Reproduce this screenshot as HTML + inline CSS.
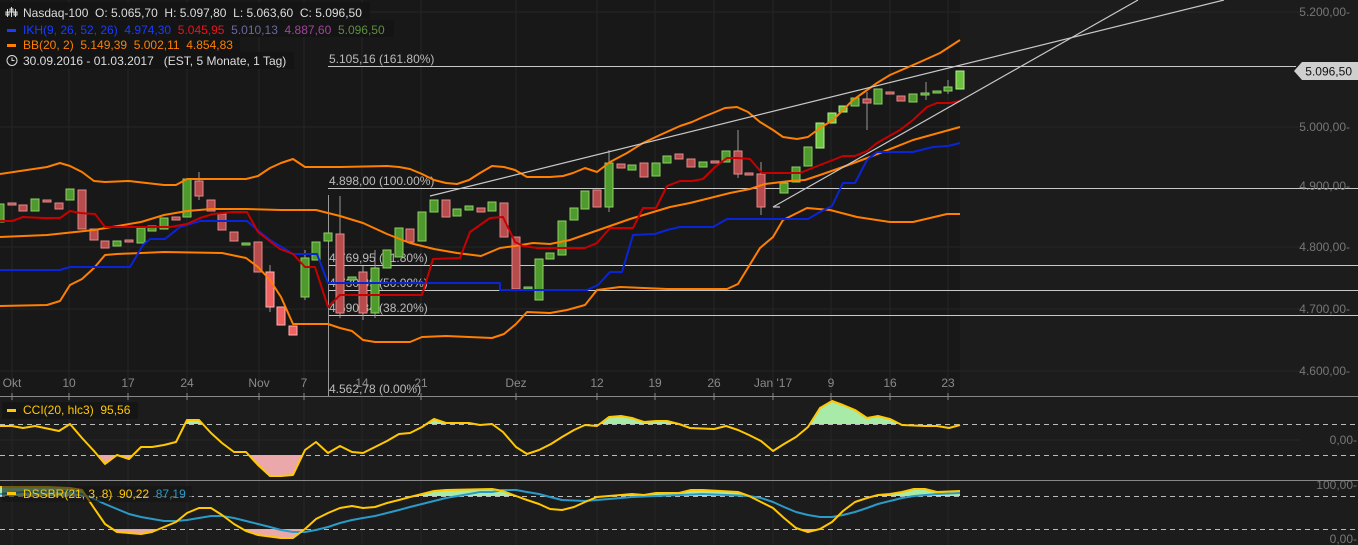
<!DOCTYPE html>
<html><head><meta charset="utf-8"><style>
body{margin:0;background:#1c1c1c;width:1358px;height:545px;overflow:hidden;font-family:"Liberation Sans",sans-serif}
svg{position:absolute;left:0;top:0}
.g{fill:#4f9a2c;stroke:#8ccf66;stroke-width:1}
.lg{fill:#6cc23c;stroke:#b4f08c;stroke-width:1}
.r{fill:#b84c4c;stroke:#e08a8a;stroke-width:1}
.lr{fill:#f06262;stroke:#ffb0b0;stroke-width:1}
.ln{fill:none;stroke-width:2;stroke-linejoin:round}
.t{font-size:12px;fill:#777}
.d{font-size:12px;fill:#8a8a8a}
.f{font-size:12px;fill:#bbb}
.lt{font-size:12px}
</style></head><body>
<svg width="1358" height="545" viewBox="0 0 1358 545">
<defs>
<clipPath id="main"><rect x="0" y="0" width="1358" height="396"/></clipPath>
<clipPath id="cciup"><rect x="0" y="397" width="1358" height="27"/></clipPath>
<clipPath id="ccidn"><rect x="0" y="455" width="1358" height="25"/></clipPath>
<clipPath id="dssup"><rect x="0" y="481" width="1358" height="15"/></clipPath>
<clipPath id="dssdn"><rect x="0" y="529" width="1358" height="16"/></clipPath>
</defs>
<rect x="0" y="0" width="960" height="396" fill="#181818"/>
<g stroke="#262626" stroke-width="1">
<line x1="0" y1="12" x2="1300" y2="12"/><line x1="0" y1="127" x2="1300" y2="127"/><line x1="0" y1="247" x2="1300" y2="247"/><line x1="0" y1="309" x2="1300" y2="309"/><line x1="0" y1="371" x2="1300" y2="371"/>
<line x1="12" y1="0" x2="12" y2="545"/><line x1="69" y1="0" x2="69" y2="545"/><line x1="128" y1="0" x2="128" y2="545"/><line x1="187" y1="0" x2="187" y2="545"/><line x1="259" y1="0" x2="259" y2="545"/><line x1="304" y1="0" x2="304" y2="545"/><line x1="362" y1="0" x2="362" y2="545"/><line x1="421" y1="0" x2="421" y2="545"/><line x1="516" y1="0" x2="516" y2="545"/><line x1="597" y1="0" x2="597" y2="545"/><line x1="655" y1="0" x2="655" y2="545"/><line x1="714" y1="0" x2="714" y2="545"/><line x1="773" y1="0" x2="773" y2="545"/><line x1="831" y1="0" x2="831" y2="545"/><line x1="890" y1="0" x2="890" y2="545"/><line x1="948" y1="0" x2="948" y2="545"/>
<line x1="0" y1="440" x2="1300" y2="440"/>
</g>
<g clip-path="url(#main)">
<!-- fib lines -->
<g stroke="#c8c8c8" stroke-width="1">
<line x1="328" y1="66.5" x2="1296" y2="66.5"/>
<line x1="328" y1="188.5" x2="1358" y2="188.5"/>
<line x1="328" y1="265.5" x2="1358" y2="265.5"/>
<line x1="328" y1="290.5" x2="1358" y2="290.5"/>
<line x1="328" y1="315.5" x2="1358" y2="315.5"/>
<line x1="328.5" y1="195" x2="328.5" y2="396" stroke="#999"/>
</g>
<text class="f" x="329" y="63">5.105,16 (161.80%)</text>
<text class="f" x="329" y="185">4.898,00 (100.00%)</text>
<text class="f" x="329" y="262">4.769,95 (61.80%)</text>
<text class="f" x="329" y="287">4.730,39 (50.00%)</text>
<text class="f" x="329" y="312">4.690,84 (38.20%)</text>
<!-- wicks -->
<g stroke="#999" stroke-width="1">
<line x1="340" y1="196" x2="340" y2="318"/><line x1="738" y1="130" x2="738" y2="178"/><line x1="761" y1="162" x2="761" y2="215"/><line x1="867" y1="92" x2="867" y2="130"/><line x1="199" y1="172" x2="199" y2="200"/><line x1="609" y1="150" x2="609" y2="212"/><line x1="270" y1="265" x2="270" y2="312"/><line x1="305" y1="250" x2="305" y2="300"/><line x1="375" y1="250" x2="375" y2="318"/><line x1="363" y1="266" x2="363" y2="320"/><line x1="926" y1="82" x2="926" y2="100"/><line x1="948" y1="80" x2="948" y2="94"/>
</g>
<!-- candles -->
<rect class="g" x="-4" y="204" width="8" height="18"/>
<rect class="r" x="8" y="203" width="8" height="2"/>
<rect class="r" x="19" y="205" width="8" height="6"/>
<rect class="g" x="31" y="199" width="8" height="12"/>
<rect class="r" x="43" y="200" width="8" height="2"/>
<rect class="r" x="55" y="203" width="8" height="6"/>
<rect class="g" x="66" y="189" width="8" height="11"/>
<rect class="r" x="78" y="190" width="8" height="39"/>
<rect class="r" x="90" y="229" width="8" height="11"/>
<rect class="r" x="101" y="241" width="8" height="7"/>
<rect class="g" x="113" y="241" width="8" height="5"/>
<rect class="r" x="125" y="240" width="8" height="2"/>
<rect class="g" x="137" y="228" width="8" height="15"/>
<rect class="g" x="148" y="226" width="8" height="5"/>
<rect class="g" x="160" y="218" width="8" height="11"/>
<rect class="r" x="172" y="217" width="8" height="3"/>
<rect class="g" x="183" y="179" width="8" height="38"/>
<rect class="r" x="195" y="181" width="8" height="15"/>
<rect class="r" x="207" y="200" width="8" height="11"/>
<rect class="r" x="218" y="214" width="8" height="16"/>
<rect class="r" x="230" y="232" width="8" height="9"/>
<rect class="g" x="242" y="243" width="8" height="2"/>
<rect class="r" x="254" y="242" width="8" height="30"/>
<rect class="lr" x="266" y="272" width="8" height="35"/>
<rect class="lr" x="277" y="307" width="8" height="18"/>
<rect class="lr" x="289" y="326" width="8" height="9"/>
<rect class="g" x="301" y="258" width="8" height="39"/>
<rect class="g" x="312" y="242" width="8" height="18"/>
<rect class="g" x="324" y="233" width="8" height="8"/>
<rect class="r" x="336" y="234" width="8" height="79"/>
<rect class="g" x="348" y="277" width="8" height="3"/>
<rect class="r" x="359" y="272" width="8" height="41"/>
<rect class="g" x="371" y="268" width="8" height="45"/>
<rect class="g" x="383" y="250" width="8" height="18"/>
<rect class="g" x="395" y="228" width="8" height="29"/>
<rect class="r" x="406" y="229" width="8" height="13"/>
<rect class="g" x="418" y="212" width="8" height="29"/>
<rect class="g" x="430" y="200" width="8" height="12"/>
<rect class="r" x="442" y="200" width="8" height="17"/>
<rect class="g" x="453" y="209" width="8" height="7"/>
<rect class="g" x="465" y="206" width="8" height="4"/>
<rect class="r" x="477" y="208" width="8" height="4"/>
<rect class="g" x="488" y="202" width="8" height="9"/>
<rect class="r" x="500" y="203" width="8" height="34"/>
<rect class="r" x="512" y="237" width="8" height="52"/>
<rect class="g" x="524" y="287" width="8" height="2"/>
<rect class="g" x="535" y="259" width="8" height="41"/>
<rect class="g" x="546" y="253" width="8" height="6"/>
<rect class="g" x="558" y="221" width="8" height="34"/>
<rect class="g" x="570" y="208" width="8" height="12"/>
<rect class="g" x="581" y="191" width="8" height="18"/>
<rect class="r" x="593" y="190" width="8" height="17"/>
<rect class="g" x="605" y="163" width="8" height="44"/>
<rect class="r" x="617" y="164" width="8" height="4"/>
<rect class="g" x="628" y="165" width="8" height="5"/>
<rect class="r" x="640" y="163" width="8" height="14"/>
<rect class="g" x="652" y="163" width="8" height="13"/>
<rect class="g" x="663" y="156" width="8" height="7"/>
<rect class="r" x="675" y="154" width="8" height="5"/>
<rect class="r" x="687" y="159" width="8" height="8"/>
<rect class="g" x="699" y="162" width="8" height="5"/>
<rect class="r" x="711" y="161" width="8" height="2"/>
<rect class="g" x="722" y="151" width="8" height="11"/>
<rect class="r" x="734" y="151" width="8" height="23"/>
<rect class="r" x="745" y="173" width="8" height="2"/>
<rect class="r" x="757" y="174" width="8" height="33"/>
<rect class="g" x="780" y="183" width="8" height="10"/>
<rect class="g" x="792" y="167" width="8" height="15"/>
<rect class="g" x="804" y="147" width="8" height="19"/>
<rect class="lg" x="816" y="123" width="8" height="25"/>
<rect class="lg" x="828" y="113" width="8" height="10"/>
<rect class="lg" x="839" y="106" width="8" height="6"/>
<rect class="g" x="851" y="98" width="8" height="8"/>
<rect class="r" x="863" y="99" width="8" height="4"/>
<rect class="g" x="874" y="89" width="8" height="15"/>
<rect class="r" x="886" y="92" width="8" height="2"/>
<rect class="r" x="897" y="96" width="8" height="5"/>
<rect class="g" x="909" y="94" width="8" height="8"/>
<rect class="g" x="921" y="93" width="8" height="2"/>
<rect class="g" x="933" y="91" width="8" height="2"/>
<rect class="g" x="944" y="87" width="8" height="4"/>
<rect class="lg" x="956" y="71" width="8" height="18"/>
<!-- indicator lines -->
<polyline class="ln" stroke="#ff7f00" points="0,174 47,167 60,163 70,166 82,172 94,181 105,182 129,181 164,185 176,185 187,179 246,179 258,176 270,168 281,163 293,159 305,167 340,167 387,166 399,167 410,169 422,174 434,180 446,183 457,184 469,180 480,173 492,166 504,167 515,170 527,177 550,177 563,176 573,173 585,168 597,172 610,162 627,153 643,143 660,135 680,126 692,122 703,117 713,113 725,108 737,107 748,112 760,122 773,130 783,137 797,139 808,137 820,128 833,120 853,100 877,83 890,75 920,62 940,53 960,40"/>
<polyline class="ln" stroke="#ff7f00" points="0,237 47,235 94,230 141,222 164,215 187,211 211,209 246,209 281,210 316,210 340,216 363,223 387,234 410,243 434,249 457,253 481,256 500,248 515,246 533,243 550,244 570,240 590,233 610,226 630,219 650,213 670,207 690,203 710,198 730,193 750,189 765,184 790,181 805,180 820,175 840,168 870,157 913,140 960,127"/>
<polyline class="ln" stroke="#ff7f00" points="0,306 47,305 60,301 70,285 82,279 94,268 105,255 117,254 164,252 222,253 246,258 258,267 270,280 281,297 293,324 328,324 340,328 352,331 363,340 375,342 410,342 422,337 446,336 492,338 504,334 516,324 527,312 550,313 567,310 585,305 597,290 620,287 667,289 727,289 738,284 760,248 773,237 783,220 807,208 830,210 857,217 890,222 913,222 947,214 960,214"/>
<polyline class="ln" stroke="#0a24d8" points="0,270 60,270 70,267 130,267 143,245 150,239 165,239 180,227 200,221 247,221 260,232 270,240 293,254 317,254 328,283 500,283 500,290 587,290 598,285 610,272 622,272 633,235 655,234 667,230 680,227 713,227 727,219 808,219 820,212 832,206 843,183 855,183 867,160 877,152 913,152 933,147 948,146 960,143"/>
<polyline class="ln" stroke="#c80000" points="0,221 12,221 23,217 43,218 60,218 70,211 80,213 95,214 105,227 170,227 187,224 200,218 213,214 233,212 247,212 258,232 280,249 293,254 305,267 315,267 328,307 340,295 422,295 433,259 460,258 470,232 490,218 503,217 515,242 523,246 537,248 585,248 597,243 610,228 633,228 643,208 656,208 667,186 680,181 692,181 703,179 715,167 727,158 737,158 750,159 762,173 800,173 820,165 833,160 843,156 855,156 867,151 877,143 900,130 913,120 927,107 937,103 950,103 960,101"/>
<g stroke="#c8c8c8" stroke-width="1.2">
<line x1="430" y1="196" x2="1224" y2="0"/>
<line x1="773" y1="207" x2="1138" y2="0"/>
<line x1="773" y1="207" x2="780" y2="207"/>
</g>
</g>
<text class="f" x="329" y="393">4.562,78 (0.00%)</text>
<!-- axes -->
<g class="t" text-anchor="end">
<text x="1350" y="16">5.200,00-</text><text x="1350" y="131">5.000,00-</text><text x="1350" y="190">4.900,00-</text><text x="1350" y="251">4.800,00-</text><text x="1350" y="313">4.700,00-</text><text x="1350" y="375">4.600,00-</text>
<text x="1357" y="444">0,00-</text><text x="1357" y="489">100,00-</text><text x="1357" y="543">0,00-</text>
</g>
<path d="M1294,71 L1302,62 L1358,62 L1358,80 L1302,80 Z" fill="#cfcfcf"/>
<text x="1352" y="75.5" font-size="12" fill="#111" text-anchor="end">5.096,50</text>
<g class="d" text-anchor="middle">
<text x="12" y="387">Okt</text><text x="69" y="387">10</text><text x="128" y="387">17</text><text x="187" y="387">24</text><text x="259" y="387">Nov</text><text x="304" y="387">7</text><text x="362" y="387">14</text><text x="421" y="387">21</text><text x="516" y="387">Dez</text><text x="597" y="387">12</text><text x="655" y="387">19</text><text x="714" y="387">26</text><text x="773" y="387">Jan '17</text><text x="831" y="387">9</text><text x="890" y="387">16</text><text x="948" y="387">23</text>
</g>
<line x1="0" y1="396.5" x2="1358" y2="396.5" stroke="#888"/>
<line x1="0" y1="480.5" x2="1358" y2="480.5" stroke="#888"/>
<g stroke="#888" stroke-width="1">
<line x1="12" y1="393" x2="12" y2="400"/><line x1="69" y1="393" x2="69" y2="400"/><line x1="128" y1="393" x2="128" y2="400"/><line x1="187" y1="393" x2="187" y2="400"/><line x1="259" y1="393" x2="259" y2="400"/><line x1="304" y1="393" x2="304" y2="400"/><line x1="421" y1="393" x2="421" y2="400"/><line x1="516" y1="393" x2="516" y2="400"/><line x1="597" y1="393" x2="597" y2="400"/><line x1="655" y1="393" x2="655" y2="400"/><line x1="714" y1="393" x2="714" y2="400"/><line x1="773" y1="393" x2="773" y2="400"/><line x1="831" y1="393" x2="831" y2="400"/><line x1="890" y1="393" x2="890" y2="400"/><line x1="948" y1="393" x2="948" y2="400"/>
</g>
<g stroke="#bbb" stroke-dasharray="5,4" stroke-width="1">
<line x1="0" y1="424.5" x2="1358" y2="424.5"/><line x1="0" y1="455.5" x2="1358" y2="455.5"/>
<line x1="0" y1="496.5" x2="1358" y2="496.5"/><line x1="0" y1="529.5" x2="1358" y2="529.5"/>
</g>
<!-- CCI -->
<polygon clip-path="url(#cciup)" fill="#a8eba8" points="0,426 12,426 23,428 35,426 59,431 70,424 82,438 94,451 105,464 117,455 129,459 141,447 152,447 164,445 176,442 187,420 199,420 211,433 222,443 234,452 246,452 258,465 270,476 281,476 293,475 305,450 316,442 328,453 340,446 352,452 363,453 375,447 387,441 399,434 410,433 422,427 434,419 446,423 469,423 480,425 492,424 503,432 516,447 527,454 539,450 551,444 562,437 574,430 585,425 597,426 609,417 621,416 632,418 644,422 656,421 667,421 679,424 690,428 714,429 726,426 738,430 749,435 761,441 773,451 784,444 796,437 808,427 820,408 832,401 843,405 855,410 867,418 878,416 890,419 902,425 925,426 937,426 949,428 960,425 960,424 0,424"/>
<polygon clip-path="url(#ccidn)" fill="#eba8ab" points="0,426 12,426 23,428 35,426 59,431 70,424 82,438 94,451 105,464 117,455 129,459 141,447 152,447 164,445 176,442 187,420 199,420 211,433 222,443 234,452 246,452 258,465 270,476 281,476 293,475 305,450 316,442 328,453 340,446 352,452 363,453 375,447 387,441 399,434 410,433 422,427 434,419 446,423 469,423 480,425 492,424 503,432 516,447 527,454 539,450 551,444 562,437 574,430 585,425 597,426 609,417 621,416 632,418 644,422 656,421 667,421 679,424 690,428 714,429 726,426 738,430 749,435 761,441 773,451 784,444 796,437 808,427 820,408 832,401 843,405 855,410 867,418 878,416 890,419 902,425 925,426 937,426 949,428 960,425 960,455 0,455"/>
<polyline class="ln" stroke="#ffc800" points="0,426 12,426 23,428 35,426 59,431 70,424 82,438 94,451 105,464 117,455 129,459 141,447 152,447 164,445 176,442 187,420 199,420 211,433 222,443 234,452 246,452 258,465 270,476 281,476 293,475 305,450 316,442 328,453 340,446 352,452 363,453 375,447 387,441 399,434 410,433 422,427 434,419 446,423 469,423 480,425 492,424 503,432 516,447 527,454 539,450 551,444 562,437 574,430 585,425 597,426 609,417 621,416 632,418 644,422 656,421 667,421 679,424 690,428 714,429 726,426 738,430 749,435 761,441 773,451 784,444 796,437 808,427 820,408 832,401 843,405 855,410 867,418 878,416 890,419 902,425 925,426 937,426 949,428 960,425"/>
<!-- DSS -->
<polygon clip-path="url(#dssup)" fill="#a8eba8" points="0,487 47,487 70,488 82,490 94,508 105,524 117,532 141,534 152,532 164,527 176,522 187,513 199,508 211,508 222,515 234,524 246,531 258,535 281,538 293,538 305,529 316,519 328,513 340,508 352,506 363,508 375,507 387,503 399,500 410,497 422,494 434,491 446,490 492,489 503,491 516,496 527,500 539,504 550,509 562,510 574,507 585,502 597,497 621,495 632,494 644,495 656,493 679,493 691,490 703,490 738,492 749,496 761,502 773,508 784,518 796,528 808,532 820,529 832,522 843,511 855,502 867,498 878,495 890,494 902,492 914,489 925,489 937,492 960,491 960,496 0,496"/>
<polygon clip-path="url(#dssdn)" fill="#eba8ab" points="0,487 47,487 70,488 82,490 94,508 105,524 117,532 141,534 152,532 164,527 176,522 187,513 199,508 211,508 222,515 234,524 246,531 258,535 281,538 293,538 305,529 316,519 328,513 340,508 352,506 363,508 375,507 387,503 399,500 410,497 422,494 434,491 446,490 492,489 503,491 516,496 527,500 539,504 550,509 562,510 574,507 585,502 597,497 621,495 632,494 644,495 656,493 679,493 691,490 703,490 738,492 749,496 761,502 773,508 784,518 796,528 808,532 820,529 832,522 843,511 855,502 867,498 878,495 890,494 902,492 914,489 925,489 937,492 960,491 960,529 0,529"/>
<polyline class="ln" stroke="#2a9ac8" points="0,494 23,492 70,491 82,494 94,499 105,504 117,509 129,514 141,517 164,521 176,521 187,520 199,518 211,516 222,516 234,518 246,521 258,524 270,527 281,530 293,532 305,532 316,530 328,527 340,523 352,520 363,518 375,516 387,513 399,510 410,507 422,504 434,501 446,498 469,494 480,492 492,492 503,490 516,490 527,492 539,494 550,497 562,500 585,501 609,499 632,497 656,496 679,495 703,494 726,495 749,496 761,498 773,502 784,507 796,512 808,515 820,517 832,517 843,515 855,512 867,508 878,504 890,501 902,498 914,496 937,494 960,493"/>
<polyline class="ln" stroke="#ffc800" points="0,487 47,487 70,488 82,490 94,508 105,524 117,532 141,534 152,532 164,527 176,522 187,513 199,508 211,508 222,515 234,524 246,531 258,535 281,538 293,538 305,529 316,519 328,513 340,508 352,506 363,508 375,507 387,503 399,500 410,497 422,494 434,491 446,490 492,489 503,491 516,496 527,500 539,504 550,509 562,510 574,507 585,502 597,497 621,495 632,494 644,495 656,493 679,493 691,490 703,490 738,492 749,496 761,502 773,508 784,518 796,528 808,532 820,529 832,522 843,511 855,502 867,498 878,495 890,494 902,492 914,489 925,489 937,492 960,491"/>
<!-- legends -->
<rect x="0" y="2" width="370" height="17" fill="#141414" opacity="0.85"/>
<rect x="0" y="20" width="394" height="17" fill="#141414" opacity="0.85"/>
<rect x="0" y="37" width="240" height="17" fill="#141414" opacity="0.85"/>
<rect x="0" y="52" width="294" height="17" fill="#141414" opacity="0.85"/>
<g stroke="#ddd" stroke-width="1" fill="none">
<line x1="7.5" y1="9" x2="7.5" y2="17"/><line x1="11.5" y1="7" x2="11.5" y2="17"/><line x1="15.5" y1="9" x2="15.5" y2="17"/>
<rect x="6" y="12" width="3" height="3"/><rect x="10" y="9" width="3" height="3"/><rect x="14" y="12" width="3" height="3"/>
<circle cx="12" cy="60.5" r="5"/><path d="M12,57.5 V60.5 H14.5"/>
</g>
<text x="23" y="17" class="lt" fill="#ddd" xml:space="preserve">Nasdaq-100  O: 5.065,70  H: 5.097,80  L: 5.063,60  C: 5.096,50</text>
<rect x="7" y="29" width="9" height="3" fill="#1a3cff"/>
<text x="23" y="34" class="lt" xml:space="preserve"><tspan fill="#1a3cff">IKH(9, 26, 52, 26)  4.974,30  </tspan><tspan fill="#e8141e">5.045,95  </tspan><tspan fill="#6a6a9c">5.010,13  </tspan><tspan fill="#a0459a">4.887,60  </tspan><tspan fill="#5e8e42">5.096,50</tspan></text>
<rect x="7" y="44" width="9" height="3" fill="#ff7f00"/>
<text x="23" y="49" class="lt" fill="#ff7f00" xml:space="preserve">BB(20, 2)  5.149,39  5.002,11  4.854,83</text>
<text x="23" y="65" class="lt" fill="#ddd" xml:space="preserve">30.09.2016 - 01.03.2017   (EST, 5 Monate, 1 Tag)</text>
<rect x="2" y="402" width="136" height="17" fill="#141414" opacity="0.85"/>
<rect x="7" y="409" width="9" height="3" fill="#ffc800"/>
<text x="23" y="414" class="lt" fill="#ffc800" xml:space="preserve">CCI(20, hlc3)  95,56</text>
<rect x="2" y="486" width="190" height="16" fill="#141414" opacity="0.6"/>
<rect x="7" y="492" width="9" height="3" fill="#ffc800"/>
<text x="23" y="498" class="lt" xml:space="preserve"><tspan fill="#ffc800">DSSBR(21, 3, 8)  90,22  </tspan><tspan fill="#2a9ac8">87,19</tspan></text>
</svg>
</body></html>
